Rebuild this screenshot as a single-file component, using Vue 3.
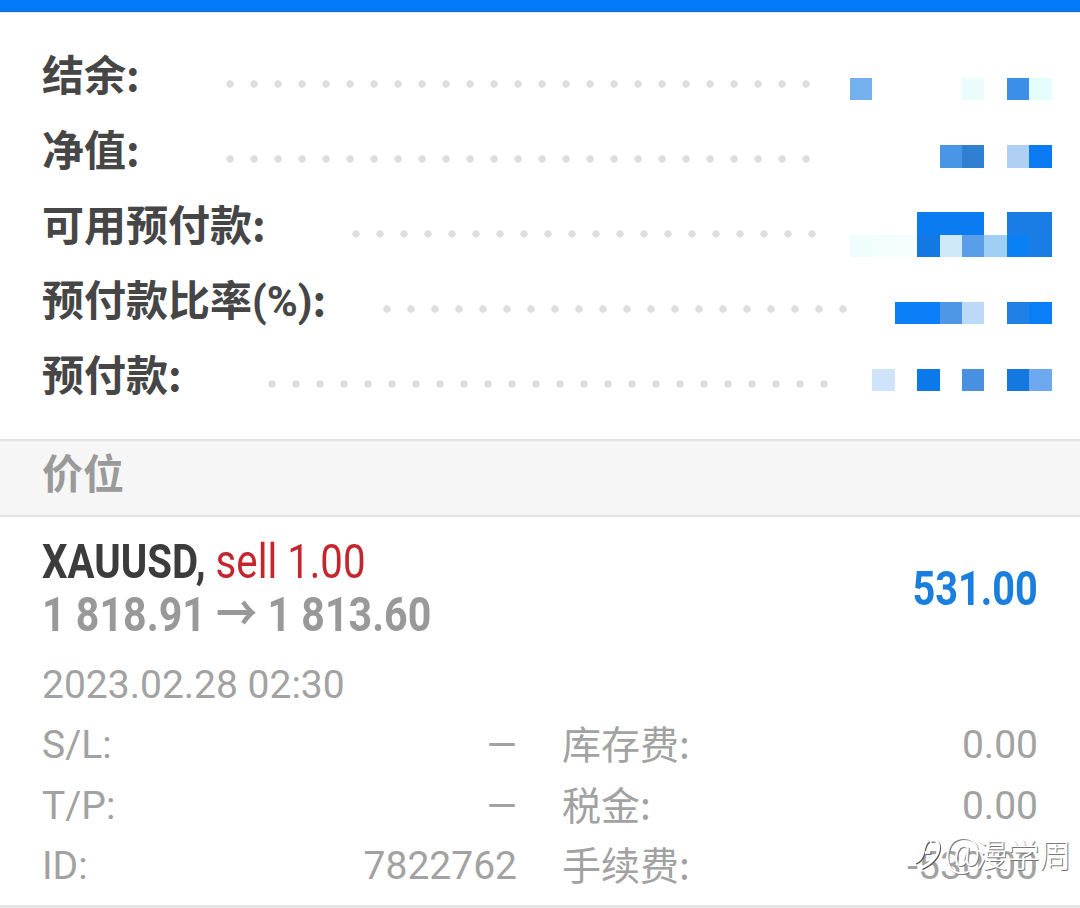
<template>
  <div class="page">
    <div class="top-bar"></div>

    <section class="summary">
      <div v-for="row in rows" :key="row.label" class="summary-row">
        <span class="summary-label" :style="{ width: row.dotStart - 42 + 'px' }">{{ row.label }}<span v-if="row.unit" class="unit">{{ row.unit }}</span>{{ row.unit ? ':' : '' }}</span>
        <span class="dots" :style="{ width: row.dots * 24 + 'px' }"></span>
      </div>
      <div class="mosaic">
        <i
          v-for="cell in cells"
          :key="cell[0] + '-' + cell[1]"
          :style="{ gridRow: cell[0] + 1, gridColumn: cell[1] + 1, background: cell[2] }"
        ></i>
      </div>
    </section>

    <div class="section-head">价位</div>

    <section class="trade">
      <div class="trade-head">
        <div class="trade-lines">
          <div class="line-one"><span class="narrow"><b>XAUUSD,</b> <span class="side">sell 1.00</span></span></div>
          <div class="line-two"><span class="narrow">1 818.91 → 1 813.60</span></div>
        </div>
        <div class="profit"><span class="narrow-r">531.00</span></div>
      </div>
      <div class="trade-date">2023.02.28 02:30</div>
      <div class="details">
        <div v-for="item in details" :key="item.k" class="detail">
          <span :class="{ cjk: item.cjk }">{{ item.k }}</span>
          <span>{{ item.v }}</span>
        </div>
      </div>
    </section>

    <div class="watermark">
      <svg class="wm-logo" viewBox="0 0 36 40" width="33" height="37">
        <path d="M18 7 C14 9 13 14 12 20 C11 25 8 29 3 31" />
        <path d="M14 20 L20 20" />
        <path d="M20 7 C26 5 30 9 29 16 C28 25 20 32 10 37" />
      </svg>
      <span class="wm-at">@</span>
      <span>漫学周</span>
    </div>
  </div>
</template>

<script setup>
const rows = [
  { label: '结余:', dotStart: 218, dots: 25 },
  { label: '净值:', dotStart: 218, dots: 25 },
  { label: '可用预付款:', dotStart: 344, dots: 20 },
  { label: '预付款比率', unit: '(%)', dotStart: 375, dots: 20 },
  { label: '预付款:', dotStart: 260, dots: 24 }
]

// row, column, colour of each censor block
const cells = [
  [0, 0, '#74b0ee'], [0, 5, '#eafdfb'], [0, 7, '#3b8fe6'], [0, 8, '#e4fdfd'],
  [3, 4, '#4a96e6'], [3, 5, '#2f80d3'], [3, 7, '#b0cff5'], [3, 8, '#0a7bf3'],
  [6, 3, '#0a7bf0'], [6, 4, '#0a7bf0'], [6, 5, '#0a7bf0'], [6, 7, '#1a7de5'], [6, 8, '#1a7de5'],
  [7, 0, '#effdfd'], [7, 1, '#f2fdfd'], [7, 2, '#f6fdfd'], [7, 3, '#1478e4'], [7, 4, '#cfe9fb'],
  [7, 5, '#5a9eea'], [7, 6, '#a0cff5'], [7, 7, '#0a80f5'], [7, 8, '#1a7de5'],
  [10, 2, '#0a7ff7'], [10, 3, '#0a7ff7'], [10, 4, '#4f96e6'], [10, 5, '#bcd9f9'], [10, 7, '#2080e6'], [10, 8, '#0a7ff5'],
  [13, 1, '#cfe3fa'], [13, 3, '#0b79ea'], [13, 5, '#4a90e0'], [13, 7, '#1478e0'], [13, 8, '#6ea9ef']
]

const details = [
  { k: 'S/L:', v: '—' },
  { k: '库存费:', v: '0.00', cjk: true },
  { k: 'T/P:', v: '—' },
  { k: '税金:', v: '0.00', cjk: true },
  { k: 'ID:', v: '7822762' },
  { k: '手续费:', v: '-530.00', cjk: true }
]
</script>

<style scoped>
.page {
  position: relative;
  width: 1080px;
  height: 908px;
  overflow: hidden;
  background: #fff;
  font-family: Roboto, "Noto Sans CJK SC", sans-serif;
}
.top-bar {
  height: 11px;
  background: #0079fb;
  border-bottom: 1px solid #1a6cc4;
  box-shadow: 0 1px 0 #d8f6fb;
}
.summary {
  position: relative;
  padding-top: 27px;
  height: 427px;
  box-sizing: border-box;
}
.summary-row {
  display: flex;
  align-items: center;
  height: 75px;
  padding-left: 42px;
}
.summary-label {
  flex: none;
  margin-bottom: 8px;
  font-family: "Noto Sans CJK SC", sans-serif;
  font-size: 42px;
  font-weight: 700;
  color: #464646;
  white-space: nowrap;
}
.unit {
  font-family: Roboto, sans-serif;
}
.dots {
  flex: none;
  height: 8px;
  margin-top: 14px;
  background: radial-gradient(circle, #dedede 3.4px, transparent 4px) 0 0 / 24px 8px repeat-x;
}
.mosaic {
  position: absolute;
  left: 850px;
  top: 66px;
  display: grid;
  grid-template-columns: repeat(9, 22.4px);
  grid-template-rows: repeat(14, 22.4px);
}
.section-head {
  height: 74px;
  padding-left: 42px;
  border-top: 2px solid #e4e4e4;
  border-bottom: 2px solid #e4e4e4;
  background: #f6f6f6;
  font-family: "Noto Sans CJK SC", sans-serif;
  font-size: 41px;
  font-weight: 700;
  line-height: 60px;
  color: #9a9a9a;
}
.trade {
  padding: 0 42px 8px;
  border-bottom: 3px solid #e6e6e6;
}
.trade-head {
  display: flex;
  align-items: center;
  justify-content: space-between;
  padding-top: 18px;
}
.line-one,
.line-two {
  font-size: 49px;
  line-height: 53px;
  white-space: nowrap;
}
.narrow {
  display: inline-block;
  transform: scaleX(0.82);
  transform-origin: left center;
}
.line-two .narrow {
  transform: scaleX(0.84);
}
.narrow-r {
  display: inline-block;
  transform: scaleX(0.81);
  transform-origin: right center;
}
.line-one b {
  color: #3c3c3c;
}
.side {
  color: #c4262e;
}
.line-two {
  font-weight: 700;
  color: #999;
}
.profit {
  font-size: 49px;
  font-weight: 700;
  color: #1a7fdc;
}
.trade-date {
  margin-top: 14px;
  font-size: 39px;
  line-height: 60px;
  color: #a2a2a2;
}
.details {
  display: grid;
  grid-template-columns: 475px 476px;
  column-gap: 45px;
  grid-auto-rows: 60.5px;
  font-size: 39px;
  color: #a2a2a2;
}
.detail {
  display: flex;
  justify-content: space-between;
  align-items: center;
}
.cjk {
  margin-bottom: 5px;
  font-family: "Noto Sans CJK SC", sans-serif;
  font-size: 39px;
  line-height: 57px;
}
.watermark {
  position: absolute;
  left: 912px;
  top: 829px;
  display: flex;
  align-items: center;
  font-family: "Noto Sans CJK SC", sans-serif;
  font-size: 32px;
  font-weight: 300;
  color: #fff;
  text-shadow: 1px 1px 0 #777;
}
.wm-at {
  margin: 0 -5px 0 -1px;
  font-family: Roboto, sans-serif;
  font-size: 40px;
}
.wm-logo {
  fill: none;
  stroke: #fff;
  stroke-width: 3;
  filter: drop-shadow(1px 1px 0 #555);
}
</style>

<style>
html, body { background: #fff; }
</style>
